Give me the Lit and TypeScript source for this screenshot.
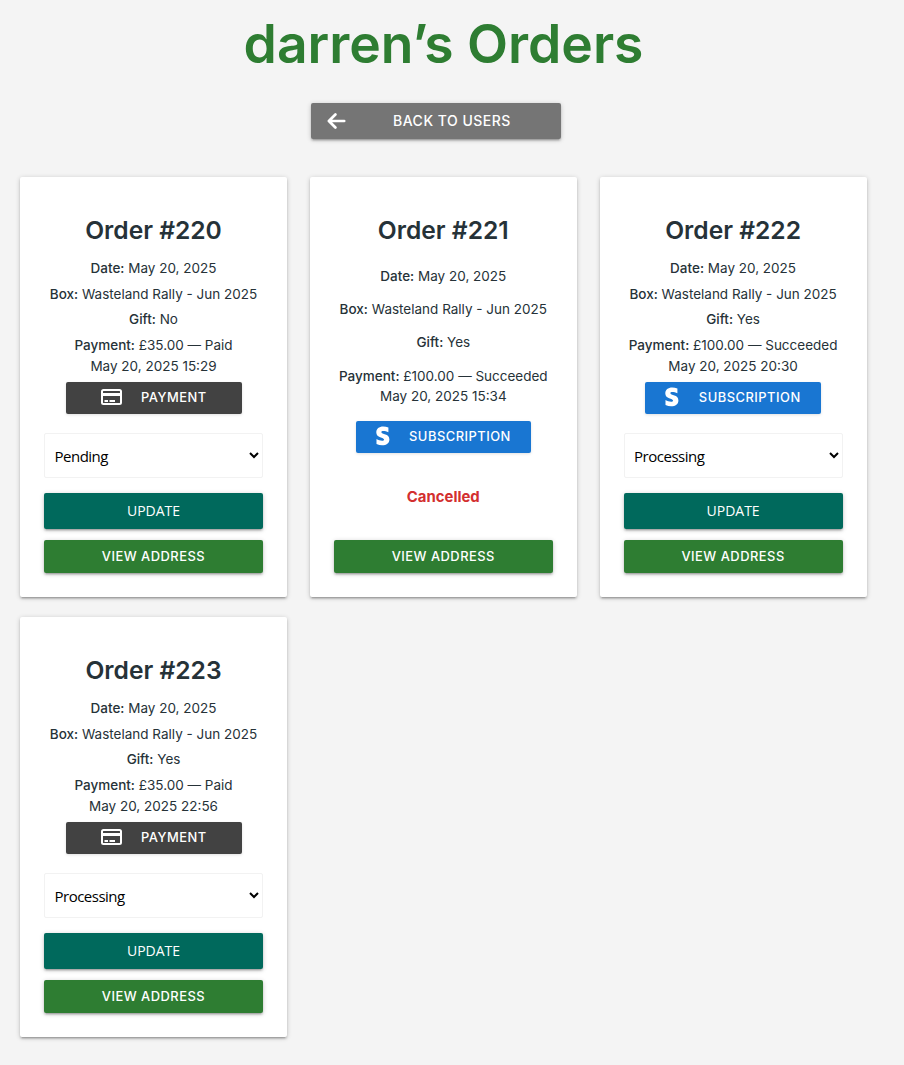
import { LitElement, html, css, svg } from "lit";
import { customElement, property } from "lit/decorators.js";

interface Order {
  id: number;
  gift: string;
  amount: string;
  state: string;
  time: string;
  kind: "payment" | "subscription";
  status: string;
}

const ORDERS: Order[] = [
  { id: 220, gift: "No", amount: "£35.00", state: "Paid", time: "15:29", kind: "payment", status: "Pending" },
  { id: 221, gift: "Yes", amount: "£100.00", state: "Succeeded", time: "15:34", kind: "subscription", status: "Cancelled" },
  { id: 222, gift: "Yes", amount: "£100.00", state: "Succeeded", time: "20:30", kind: "subscription", status: "Processing" },
  { id: 223, gift: "Yes", amount: "£35.00", state: "Paid", time: "22:56", kind: "payment", status: "Processing" },
];

const cardIcon = html`<svg class="icon" width="22" height="18" viewBox="0 0 22 18">
  ${svg`<rect x="2" y="2" width="19" height="14" rx="1.5" fill="none" stroke="#fff" stroke-width="2"/>
  <path d="M2 6.500h19" stroke="#fff" stroke-width="3"/>
  <path d="M4.500 13h3.500M9.500 13h5.500" stroke="#fff" stroke-width="2"/>`}
</svg>`;

const stripeIcon = html`<svg class="icon" width="14" height="20" viewBox="0 0 14 20">
  ${svg`<path fill="#fff" d="M5.400 6.100c0-.8.7-1.100 1.800-1.100 1.600 0 3.600.5 5.200 1.300V1.500C10.700.8 9 .6 7.200.6 3 .6.3 2.800.3 6.400c0 5.600 7.800 4.700 7.800 7.200 0 .9-.8 1.200-2 1.200-1.700 0-3.900-.7-5.600-1.700v5c1.900.8 3.800 1.200 5.600 1.200 4.300 0 7.300-2.100 7.300-5.800 0-6.100-8-5-8-7.200z"/>`}
</svg>`;

@customElement("order-card")
export class OrderCard extends LitElement {
  @property({ attribute: false }) order!: Order;

  static styles = css`
    :host {
      display: flex;
      flex-direction: column;
      align-items: stretch;
      box-sizing: border-box;
      height: 420px;
      padding: 34px 24px 24px;
      background: #fff;
      border-radius: 2px;
      color: #263238;
      text-align: center;
      font-size: 13.5px;
      line-height: 20.8px;
      box-shadow: 0 2px 2px 0 rgba(0, 0, 0, 0.14), 0 3px 1px -2px rgba(0, 0, 0, 0.12), 0 1px 5px 0 rgba(0, 0, 0, 0.2);
    }
    .title {
      margin: 0 0 9px;
      font-size: 24.6px;
      line-height: 38px;
      font-weight: 600;
    }
    .details {
      display: flex;
      flex-direction: column;
      gap: 4.8px;
      white-space: nowrap;
    }
    .cancelled .title {
      margin-bottom: 16.8px;
    }
    .cancelled .details {
      gap: 12.5px;
    }
    .body {
      display: flex;
      flex-direction: column;
      flex: 1;
    }
    b {
      font-weight: 500;
    }
    .kind {
      display: flex;
      align-items: center;
      box-sizing: border-box;
      width: 176px;
      height: 32px;
      margin: 6px auto 0;
      padding-top: 1px;
      color: #fff;
      font-size: 12.9px;
      font-weight: 500;
      letter-spacing: 0.5px;
      border-radius: 2px;
      box-shadow: 0 1px 3px rgba(0, 0, 0, 0.12);
    }
    .cancelled .kind {
      margin-top: 13.7px;
    }
    .payment {
      padding-left: 34px;
      gap: 19.5px;
      background: #424242;
    }
    .subscription {
      padding-left: 20px;
      gap: 19.5px;
      width: 175.5px;
      background: #1976d2;
    }
    .icon {
      flex: none;
      margin-bottom: 3px;
    }
    .status {
      height: 45px;
      margin: 0 0 15px;
      padding: 0 5px 0 5.5px;
      box-sizing: border-box;
      width: 100%;
      border: 1px solid #f2f2f2;
      border-radius: 2px;
      background: #fff;
      color: #000;
      font-family: "Open Sans", sans-serif;
      font-size: 15px;
      letter-spacing: -0.5px;
    }
    .actions {
      margin-top: auto;
      display: flex;
      flex-direction: column;
    }
    .btn {
      border: 0;
      padding: 0 0 1px;
      width: 100%;
      border-radius: 2px;
      color: #fff;
      letter-spacing: 0.5px;
      box-shadow: 0 2px 2px 0 rgba(0, 0, 0, 0.14), 0 3px 1px -2px rgba(0, 0, 0, 0.12), 0 1px 5px 0 rgba(0, 0, 0, 0.2);
    }
    .update {
      height: 36px;
      margin-bottom: 11px;
      background: #00695c;
      font: 400 14px "Open Sans", sans-serif;
      letter-spacing: 0;
    }
    .address {
      height: 33px;
      background: #2e7d32;
      font: 500 12.9px Inter, sans-serif;
    }
    .note {
      color: #d32f2f;
      font-size: 14.9px;
      font-weight: 700;
      line-height: 24px;
      margin-bottom: 31px;
    }
  `;

  render() {
    const o = this.order;
    const cancelled = o.status === "Cancelled";
    return html`<div class="body ${cancelled ? "cancelled" : ""}">
      <h2 class="title">Order #${o.id}</h2>
      <div class="details">
        <div><b>Date:</b> May 20, 2025</div>
        <div><b>Box:</b> Wasteland Rally - Jun 2025</div>
        <div><b>Gift:</b> ${o.gift}</div>
        <div><b>Payment:</b> ${o.amount} — ${o.state}<br />May 20, 2025 ${o.time}</div>
      </div>
      <div class="kind ${o.kind}">
        ${o.kind === "payment" ? cardIcon : stripeIcon}<span>${o.kind.toUpperCase()}</span>
      </div>
      <div class="actions">
        ${cancelled
          ? html`<div class="note">Cancelled</div>`
          : html`<select class="status"><option>${o.status}</option></select>
              <button class="btn update">UPDATE</button>`}
        <button class="btn address">VIEW ADDRESS</button>
      </div>
    </div>`;
  }
}

@customElement("app-root")
export class AppRoot extends LitElement {
  static styles = css`
    :host {
      display: block;
      box-sizing: border-box;
      min-height: 1065px;
      padding: 13px 37px 28px 20px;
      background: #f4f4f4;
      font-family: Inter, sans-serif;
    }
    .heading {
      margin: 0 0 28px;
      color: #2e7d32;
      text-align: center;
      font-size: 53.4px;
      font-weight: 600;
      line-height: 62px;
    }
    .back {
      display: flex;
      align-items: center;
      box-sizing: border-box;
      width: 250px;
      height: 36px;
      margin: 0 0 38px 291px;
      padding: 0 0 0 15.5px;
      gap: 47.5px;
      border-radius: 2px;
      background: #757575;
      color: #fff;
      font-size: 14px;
      font-weight: 500;
      letter-spacing: 0.5px;
      box-shadow: 0 2px 2px 0 rgba(0, 0, 0, 0.14), 0 3px 1px -2px rgba(0, 0, 0, 0.12), 0 1px 5px 0 rgba(0, 0, 0, 0.2);
    }
    .back span {
      padding-bottom: 1px;
    }
    .grid {
      display: grid;
      grid-template-columns: repeat(3, 267px);
      column-gap: 22.8px;
      row-gap: 20px;
    }
  `;

  render() {
    return html`<h1 class="heading">darren’s Orders</h1>
      <div class="back">
        <svg width="19" height="16" viewBox="0 0 19 16" fill="none" stroke="#fff" stroke-width="2.7" stroke-linecap="round" stroke-linejoin="round">
          <path d="M8.400 1.500L1.900 8l6.500 6.500M2.200 8h15" />
        </svg>
        <span>BACK TO USERS</span>
      </div>
      <div class="grid">${ORDERS.map((o) => html`<order-card .order=${o}></order-card>`)}</div>`;
  }
}
